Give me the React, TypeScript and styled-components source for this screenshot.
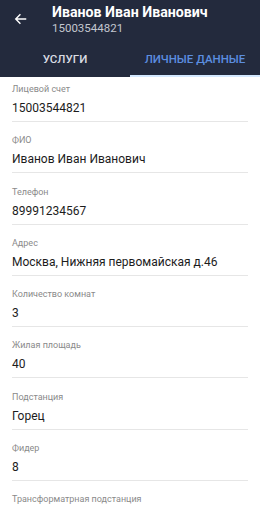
import styled, { createGlobalStyle } from 'styled-components';

const GlobalStyle = createGlobalStyle`
  body {
    margin: 0;
    background: #ffffff;
    font-family: Roboto, "Noto Sans", sans-serif;
  }
`;

const Screen = styled.div`
  width: 260px;
  height: 507px;
  overflow: hidden;
  background: #ffffff;
`;

const Header = styled.header`
  background: #232a3d;
  color: #ffffff;
`;

const TopBar = styled.div`
  display: flex;
  align-items: flex-start;
  padding: 3px 0 0 12px;
  height: 42px;
  box-sizing: border-box;
`;

const BackButton = styled.button`
  width: 18px;
  height: 18px;
  margin: 7px 22px 0 0;
  padding: 0;
  border: none;
  background: none;
  color: #ffffff;
  display: flex;
  align-items: center;
  justify-content: center;
`;

const TitleBlock = styled.div`
  display: flex;
  flex-direction: column;
`;

const Title = styled.div`
  font-size: 14.2px;
  font-weight: 700;
  line-height: 18px;
`;

const Subtitle = styled.div`
  font-size: 11.5px;
  line-height: 15px;
  color: #c3c7d0;
`;

const Tabs = styled.div`
  display: grid;
  grid-template-columns: 1fr 1fr;
`;

const Tab = styled.div<{ active?: boolean }>`
  height: 35px;
  display: flex;
  align-items: center;
  justify-content: center;
  font-size: 11.5px;
  font-weight: 500;
  color: ${(p) => (p.active ? '#5b8ee0' : '#d9dce3')};
  box-sizing: border-box;
  border-bottom: 2px solid ${(p) => (p.active ? '#d3e8ff' : 'transparent')};
`;

const List = styled.div`
  padding: 5px 12px 0 12px;
`;

const Field = styled.div`
  border-bottom: 1px solid #e6e6e6;
  padding-bottom: 3px;
  margin-bottom: 11.3px;
`;

const Label = styled.div`
  font-size: 9px;
  line-height: 14px;
  color: #8a8a8a;
`;

const Value = styled.div`
  font-size: 12px;
  line-height: 20px;
  margin-top: 2px;
  color: #1c1c1c;
`;

const fields: [string, string][] = [
  ['Лицевой счет', '15003544821'],
  ['ФИО', 'Иванов Иван Иванович'],
  ['Телефон', '89991234567'],
  ['Адрес', 'Москва, Нижняя первомайская д.46'],
  ['Количество комнат', '3'],
  ['Жилая площадь', '40'],
  ['Подстанция', 'Горец'],
  ['Фидер', '8'],
  ['Трансформатрная подстанция', ''],
];

export default function App() {
  return (
    <Screen>
      <GlobalStyle />
      <Header>
        <TopBar>
          <BackButton>
            <svg width="14" height="14" viewBox="0 0 24 24" fill="none" stroke="currentColor" strokeWidth="2.4">
              <path d="M21 12H4M11 4l-8 8 8 8" />
            </svg>
          </BackButton>
          <TitleBlock>
            <Title>Иванов Иван Иванович</Title>
            <Subtitle>15003544821</Subtitle>
          </TitleBlock>
        </TopBar>
        <Tabs>
          <Tab>УСЛУГИ</Tab>
          <Tab active>ЛИЧНЫЕ ДАННЫЕ</Tab>
        </Tabs>
      </Header>
      <List>
        {fields.map(([label, value]) => (
          <Field key={label}>
            <Label>{label}</Label>
            <Value>{value}</Value>
          </Field>
        ))}
      </List>
    </Screen>
  );
}
